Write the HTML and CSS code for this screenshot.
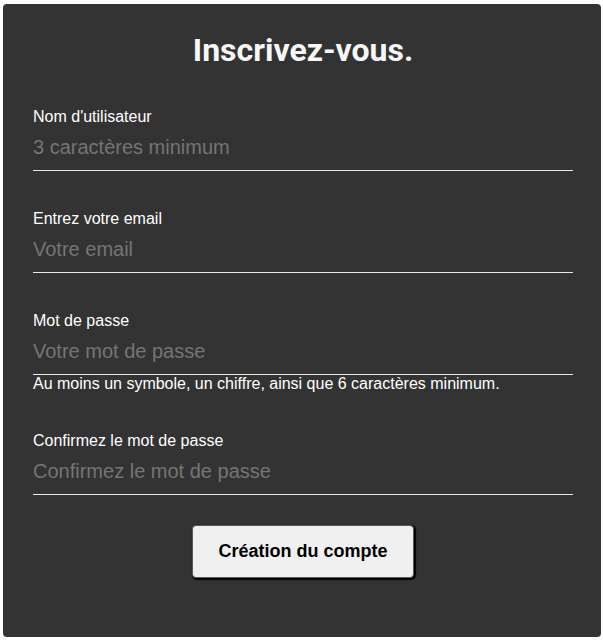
FILE: index.html
```html
<!DOCTYPE html>
<html lang="fr">
<head>
<meta charset="utf-8">
<title>Inscrivez-vous.</title>
<link rel="stylesheet" href="styles.css">
</head>
<body>
<div class="page">
  <form class="card">
    <h1 class="title">Inscrivez-vous.</h1>
    <div class="field">
      <label class="label" for="user">Nom d'utilisateur</label>
      <input class="input" id="user" type="text" placeholder="3 caractères minimum">
    </div>
    <div class="field">
      <label class="label" for="email">Entrez votre email</label>
      <input class="input" id="email" type="email" placeholder="Votre email">
    </div>
    <div class="field">
      <label class="label" for="pass">Mot de passe</label>
      <input class="input" id="pass" type="password" placeholder="Votre mot de passe">
      <p class="hint">Au moins un symbole, un chiffre, ainsi que 6 caractères minimum.</p>
    </div>
    <div class="field">
      <label class="label" for="pass2">Confirmez le mot de passe</label>
      <input class="input" id="pass2" type="password" placeholder="Confirmez le mot de passe">
    </div>
    <div class="actions">
      <button class="btn" type="button">Création du compte</button>
    </div>
  </form>
</div>
</body>
</html>
```

FILE: styles.css
```css
* { box-sizing: border-box; }
html, body { margin: 0; padding: 0; background: #ffffff; }
body { font-family: "Liberation Sans", Arial, sans-serif; }

.page {
  padding: 4px 2px 3px 3px;
}

.card {
  background: #333333;
  border-radius: 4px;
  height: 633px;
  padding: 28px 28px 0 30px;
  display: flex;
  flex-direction: column;
}

.title {
  margin: 0;
  font-family: Roboto, "Liberation Sans", sans-serif;
  font-size: 32px;
  line-height: 37px;
  font-weight: bold;
  color: #f7f7f7;
  text-align: center;
}

.field {
  display: flex;
  flex-direction: column;
  margin-top: 39px;
}

.label {
  font-size: 16px;
  line-height: 18px;
  color: #ffffff;
  margin-bottom: 10px;
}

.input {
  width: 100%;
  margin: 0;
  padding: 0 0 11px 0;
  border: 0;
  border-bottom: 1px solid #e8e8e8;
  background: transparent;
  font-family: inherit;
  font-size: 20px;
  line-height: 23px;
  color: #ffffff;
  outline: none;
}
.input::placeholder { color: #757575; opacity: 1; }

.hint {
  margin: 0;
  font-size: 16px;
  line-height: 18px;
  color: #ffffff;
}

.actions {
  display: flex;
  justify-content: center;
  margin-top: 30px;
}

.btn {
  height: 53px;
  padding: 0 25px;
  background: #f0f0f0;
  border: 1px solid #5a5a5a;
  border-radius: 4px;
  box-shadow: 1px 1px 1px 1px #000000;
  font-family: inherit;
  font-size: 18px;
  font-weight: bold;
  color: #000000;
  cursor: pointer;
}
```
